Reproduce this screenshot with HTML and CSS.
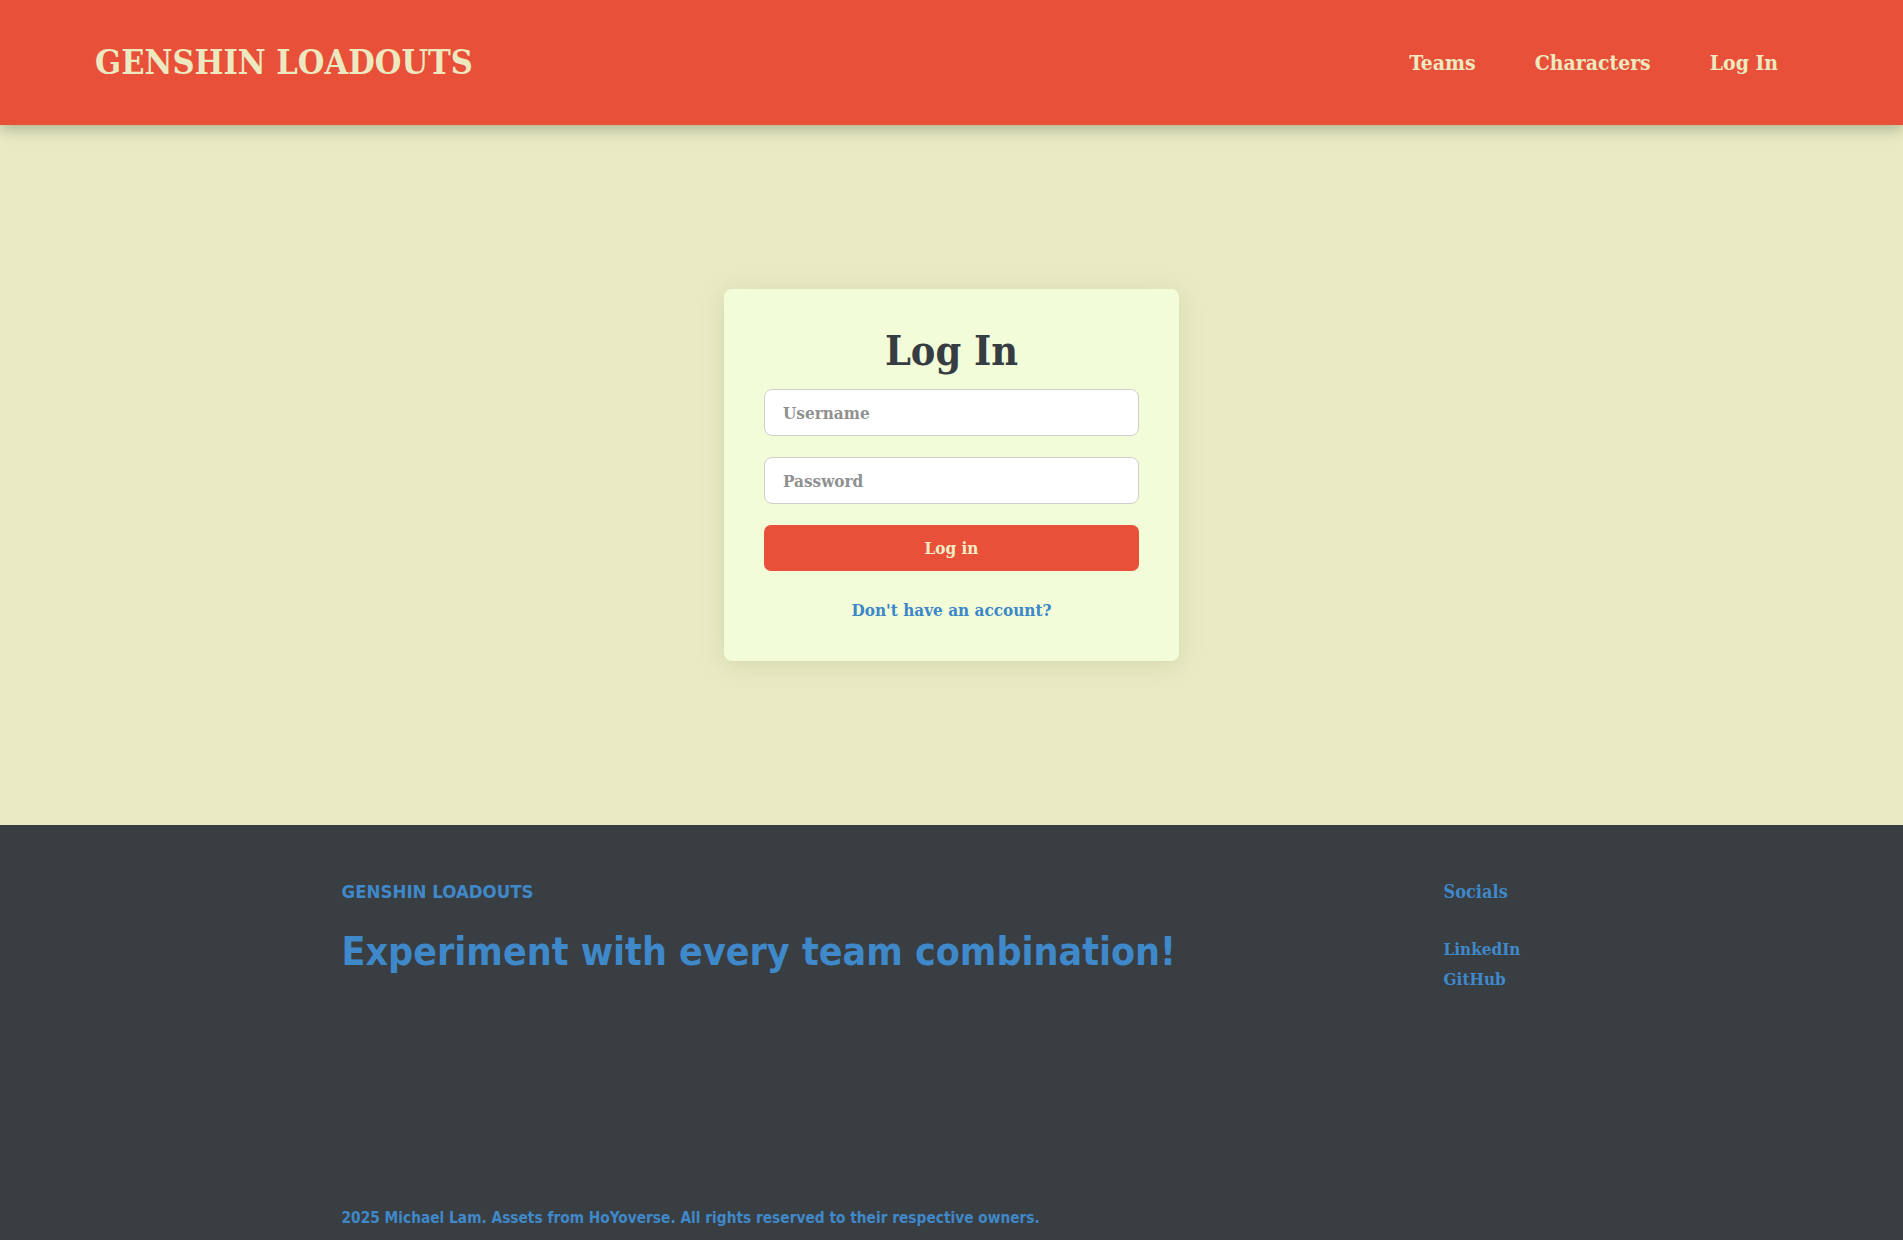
FILE: index.html
```html
<!DOCTYPE html>
<html lang="en">
<head>
<meta charset="utf-8">
<title>Genshin Loadouts - Log In</title>
<link rel="stylesheet" href="styles.css">
</head>
<body>
<header class="site-header">
  <a class="logo" href="#">GENSHIN LOADOUTS</a>
  <nav class="nav">
    <a href="#">Teams</a>
    <a href="#">Characters</a>
    <a href="#">Log In</a>
  </nav>
</header>
<main class="main">
  <form class="card">
    <h1 class="card-title">Log In</h1>
    <input class="field" type="text" placeholder="Username">
    <input class="field" type="password" placeholder="Password">
    <button class="btn" type="button">Log in</button>
    <a class="signup" href="#">Don't have an account?</a>
  </form>
</main>
<footer class="site-footer">
  <div class="footer-inner">
    <div class="footer-top">
      <div class="footer-brand">
        <div class="footer-label">GENSHIN LOADOUTS</div>
        <div class="footer-tagline">Experiment with every team combination!</div>
      </div>
      <div class="footer-socials">
        <div class="socials-title">Socials</div>
        <a href="#">LinkedIn</a>
        <a href="#">GitHub</a>
      </div>
    </div>
    <div class="copyright">2025 Michael Lam. Assets from HoYoverse. All rights reserved to their respective owners.</div>
  </div>
</footer>
</body>
</html>
```
FILE: styles.css
```css
* { box-sizing: border-box; }
html, body { margin: 0; padding: 0; }
body {
  background: #e9ebc5;
  font-family: "DejaVu Serif Condensed", "DejaVu Serif", serif;
  color: #363d42;
}
a { text-decoration: none; }

.site-header {
  height: 125px;
  background: #e85039;
  display: flex;
  align-items: center;
  justify-content: space-between;
  padding: 0 125px 0 95px;
  box-shadow: 0 4px 14px rgba(60, 70, 40, 0.35);
  position: relative;
  z-index: 2;
}
.logo {
  color: #ece9c0;
  font-weight: bold;
  font-size: 34px;
  margin-top: -2px;
}
.nav { display: flex; gap: 59px; }
.nav a {
  color: #ece9c0;
  font-weight: bold;
  font-size: 21px;
}

.main {
  height: 700px;
  display: flex;
  align-items: center;
  justify-content: center;
}
.card {
  width: 455px;
  height: 372px;
  background: #f2fcd9;
  border-radius: 8px;
  padding: 33px 40px 0;
  display: flex;
  flex-direction: column;
  box-shadow: 0 4px 24px rgba(120, 120, 60, 0.18);
}
.card-title {
  margin: 0 0 9px;
  text-align: center;
  font-size: 41px;
  line-height: 58px;
  font-weight: bold;
  color: #363d42;
}
.field {
  height: 47px;
  border: 1px solid #cfd0cc;
  border-radius: 8px;
  background: #fff;
  padding: 0 18px;
  font-family: inherit;
  font-size: 17px;
  margin-bottom: 21px;
  color: #363d42;
}
.field::placeholder { color: #8f9190; font-weight: bold; }
.btn {
  height: 46px;
  border: 0;
  border-radius: 7px;
  background: #e85039;
  color: #f1ebc6;
  font-family: inherit;
  font-weight: bold;
  font-size: 17px;
}
.signup {
  margin-top: 29px;
  text-align: center;
  color: #3b87c8;
  font-weight: bold;
  font-size: 17px;
}

.site-footer {
  background: #393e42;
  height: 415px;
}
.footer-inner {
  width: 1220px;
  margin: 0 auto;
  height: 100%;
  display: flex;
  flex-direction: column;
  justify-content: space-between;
  padding: 56px 0 13px;
  color: #3f88c9;
}
.footer-top {
  display: flex;
  justify-content: space-between;
}
.footer-label {
  font-family: "DejaVu Sans Condensed", "DejaVu Sans", sans-serif;
  font-weight: bold;
  font-size: 18.5px;
}
.footer-tagline {
  font-family: "DejaVu Sans Condensed", "DejaVu Sans", sans-serif;
  font-weight: bold;
  font-size: 39px;
  margin-top: 27px;
}
.footer-socials {
  width: 118px;
  display: flex;
  flex-direction: column;
}
.socials-title {
  font-weight: bold;
  font-size: 18px;
  margin-bottom: 32px;
}
.footer-socials a {
  color: #3f88c9;
  font-weight: bold;
  font-size: 17px;
  line-height: 30px;
}
.copyright {
  font-family: "DejaVu Sans Condensed", "DejaVu Sans", sans-serif;
  font-weight: bold;
  font-size: 15.3px;
}
```
